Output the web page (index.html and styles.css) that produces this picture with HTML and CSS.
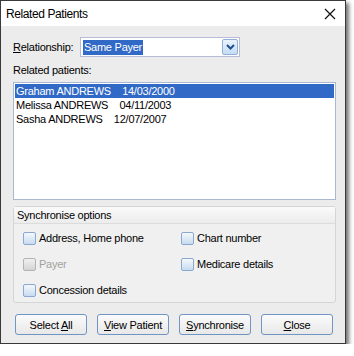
FILE: index.html
```html
<!DOCTYPE html>
<html lang="en">
<head>
    <meta charset="UTF-8">
    <title>Related Patients</title>
    <link rel="stylesheet" href="styles.css">
</head>
<body>
<div class="window">
    <!--title bar-->
    <div class="titlebar">
        <span class="title">Related Patients</span>
        <svg class="close" width="12" height="12" viewBox="0 0 12 12">
            <path d="M1 1 L11 11 M11 1 L1 11" stroke="#111" stroke-width="1.2" fill="none"/>
        </svg>
    </div>
    <div class="content">
        <div class="row-rel">
            <span class="label"><u>R</u>elationship:</span>
            <div class="combo">
                <span class="combo-text">Same Payer</span>
                <span class="combo-btn">
                    <svg width="9" height="6" viewBox="0 0 9 6">
                        <path d="M1 1 L4.5 4.5 L8 1" stroke="#1f4f8f" stroke-width="2" fill="none"/>
                    </svg>
                </span>
            </div>
        </div>
        <div class="label list-label">Related patients:</div>
        <ul class="list">
            <li class="selected">Graham ANDREWS&nbsp;&nbsp;&nbsp;&nbsp;14/03/2000</li>
            <li>Melissa ANDREWS&nbsp;&nbsp;&nbsp;&nbsp;04/11/2003</li>
            <li>Sasha ANDREWS&nbsp;&nbsp;&nbsp;&nbsp;12/07/2007</li>
        </ul>
        <div class="group">
            <div class="group-head">Synchronise options</div>
            <div class="options">
                <label class="opt"><span class="check"></span>Address, Home phone</label>
                <label class="opt"><span class="check"></span>Chart number</label>
                <label class="opt disabled"><span class="check"></span>Payer</label>
                <label class="opt"><span class="check"></span>Medicare details</label>
                <label class="opt"><span class="check"></span>Concession details</label>
            </div>
        </div>
        <div class="buttons">
            <button>Select <u>A</u>ll</button>
            <button><u>V</u>iew Patient</button>
            <button><u>S</u>ynchronise</button>
            <button><u>C</u>lose</button>
        </div>
    </div>
</div>
</body>
</html>
```

FILE: styles.css
```css
* {
    margin: 0;
    padding: 0;
    box-sizing: border-box;
}

body {
    background: #fff;
    font-family: "Liberation Sans", Arial, sans-serif;
    font-size: 11px;
    letter-spacing: -0.25px;
    color: #000;
}

ul {
    list-style: none;
}

.window {
    width: 346px;
    height: 344px;
    border: 1px solid #3a3a3a;
    background: #ececec;
    box-shadow: 3px 3px 4px rgba(0, 0, 0, 0.55);
}

.titlebar {
    height: 25px;
    background: #fff;
    display: flex;
    align-items: center;
    justify-content: space-between;
    padding: 0 9px 0 5px;
}

.title {
    font-size: 12px;
    letter-spacing: -0.4px;
}

.content {
    padding: 11px 9px 0 12px;
}

.row-rel {
    display: flex;
    align-items: center;
    height: 20px;
}

.label {
    width: 67px;
}

.combo {
    width: 160px;
    height: 20px;
    border: 1px solid #b8bcd8;
    background: #fff;
    display: flex;
    align-items: center;
    justify-content: space-between;
    padding: 0 1px 0 2px;
}

.combo-text {
    background: #3169c6;
    color: #fff;
    padding: 0 1px;
    line-height: 15px;
}

.combo-btn {
    width: 16px;
    height: 16px;
    border: 1px solid #8fb0d8;
    border-radius: 2px;
    background: linear-gradient(#eaf3fc, #c4dcf4);
    display: flex;
    align-items: center;
    justify-content: center;
}

.list-label {
    width: auto;
    margin-top: 6px;
    line-height: 14px;
}

.list {
    margin-top: 5px;
    height: 118px;
    border: 1px solid #a9b8d0;
    background: #fff;
    padding: 1px;
}

.list li {
    line-height: 14px;
    padding-left: 1px;
    white-space: pre;
}

.list li.selected {
    background: #3169c6;
    color: #fff;
}

.group {
    margin-top: 6px;
    height: 97px;
    border: 1px solid #d5d5d5;
    border-radius: 3px;
    background: #f0f0f0;
}

.group-head {
    height: 17px;
    line-height: 16px;
    padding-left: 3px;
    background: linear-gradient(#fafafa, #ececec);
    border-bottom: 1px solid #dcdcdc;
}

.options {
    display: grid;
    grid-template-columns: 158px 1fr;
    row-gap: 12px;
    padding: 7px 0 0 9px;
}

.opt {
    display: flex;
    align-items: center;
    height: 14px;
}

.opt.disabled {
    color: #a0a0a0;
}

.check {
    width: 13px;
    height: 13px;
    border: 1px solid #8aa8d0;
    border-radius: 2px;
    background: linear-gradient(#f4f8fc, #c8dbf0);
    margin-right: 3px;
}

.opt.disabled .check {
    border-color: #b4b4b4;
    background: linear-gradient(#f0f0f0, #d4d4d4);
}

.buttons {
    display: flex;
    gap: 10px;
    margin-top: 11px;
    padding-left: 2px;
}

.buttons button {
    width: 72px;
    height: 21px;
    font-family: inherit;
    font-size: 11px;
    letter-spacing: -0.25px;
    border: 1px solid #7094c4;
    border-radius: 3px;
    background: linear-gradient(#fbfbfb, #e8e8e8);
    color: #000;
}
```
